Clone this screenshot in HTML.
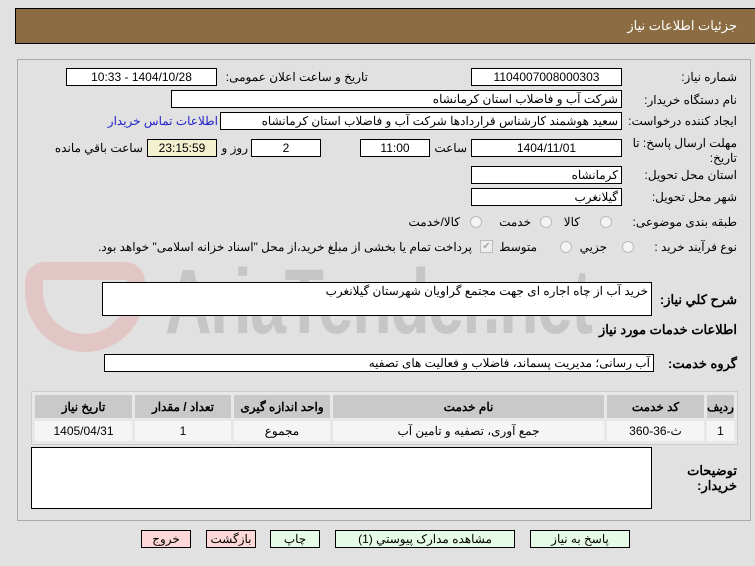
<!DOCTYPE html>
<html><head><meta charset="utf-8"><style>
*{box-sizing:border-box;margin:0;padding:0}
body{width:755px;height:566px;background:#e1e1e1;font-family:"Liberation Sans","Noto Sans CJK SC",sans-serif;font-size:12px;color:#000;position:relative;overflow:hidden}
.a{position:absolute}
.hd{left:15px;top:8px;width:745px;height:36px;background:#8b6c43;border:1px solid #000}
.hd span{position:absolute;right:22px;top:9px;color:#fff;font-size:13px}
.pn{left:17px;top:59px;width:734px;height:462px;border:1px solid #aaa;background:#e1e1e1}
.b{position:absolute;background:#fff;border:1px solid #000;direction:rtl;font-size:12px;line-height:16px;padding:0 3px;white-space:nowrap;overflow:hidden}
.c{text-align:center}
.l{position:absolute;direction:rtl;white-space:nowrap;font-size:12px}
.w{white-space:normal}
.bold{font-weight:bold;font-size:13px}
.rd{position:absolute;width:12px;height:12px;border-radius:50%;border:1px solid #bbb;background:#f4f4f4}
table{position:absolute;left:31px;top:391px;width:707px;border-collapse:separate;border-spacing:3px;border:1px solid #ccc;background:#e8e8e8;direction:rtl}
th{background:#c9c9c9;height:23px;font-size:12px}
td{background:#f5f5f5;height:20px;text-align:center}
.bt{position:absolute;top:530px;height:18px;border:1px solid #000;text-align:center;font-size:12px;line-height:16px;direction:rtl}
.wm{left:165px;top:252px;font-size:92px;line-height:100px;font-weight:bold;color:rgba(120,120,120,.25);font-family:"Liberation Sans Narrow","Liberation Sans",sans-serif;letter-spacing:-2px;transform:scaleX(.7);transform-origin:left}
</style></head><body>
<div class="a hd"><span>جزئیات اطلاعات نیاز</span></div>
<div class="a pn"></div>
<div class="a" style="left:25px;top:262px;width:120px;height:90px;border:18px solid rgba(230,150,150,.35);border-radius:20px 20px 60px 60px"></div>
<div class="a wm">AriaTender.net</div>

<div class="l" style="right:18px;top:70px">شماره نیاز:</div>
<div class="b c" style="left:471px;top:68px;width:151px;height:18px">1104007008000303</div>
<div class="l" style="right:387px;top:70px">تاریخ و ساعت اعلان عمومی:</div>
<div class="b c" style="left:66px;top:68px;width:151px;height:18px">1404/10/28 - 10:33</div>

<div class="l" style="right:18px;top:93px">نام دستگاه خریدار:</div>
<div class="b" style="left:171px;top:90px;width:451px;height:18px">شرکت آب و فاضلاب استان کرمانشاه</div>

<div class="l" style="right:18px;top:114px">ایجاد کننده درخواست:</div>
<div class="b" style="left:220px;top:112px;width:402px;height:18px">سعید هوشمند کارشناس قراردادها شرکت آب و فاضلاب استان کرمانشاه</div>
<div class="l" style="right:537px;top:114px;color:#2222cc">اطلاعات تماس خریدار</div>

<div class="l w" style="right:18px;top:136px;line-height:15px;width:112px">مهلت ارسال پاسخ: تا تاریخ:</div>
<div class="b c" style="left:471px;top:139px;width:151px;height:18px">1404/11/01</div>
<div class="l" style="right:288px;top:141px">ساعت</div>
<div class="b c" style="left:360px;top:139px;width:70px;height:18px">11:00</div>
<div class="b c" style="left:251px;top:139px;width:70px;height:18px">2</div>
<div class="l" style="right:507px;top:141px">روز و</div>
<div class="b c" style="left:147px;top:139px;width:70px;height:18px;background:#f3f0cf">23:15:59</div>
<div class="l" style="right:612px;top:141px">ساعت باقي مانده</div>

<div class="l" style="right:18px;top:168px">استان محل تحویل:</div>
<div class="b" style="left:471px;top:166px;width:151px;height:18px">کرمانشاه</div>
<div class="l" style="right:18px;top:190px">شهر محل تحویل:</div>
<div class="b" style="left:471px;top:188px;width:151px;height:18px">گیلانغرب</div>

<div class="l" style="right:18px;top:215px">طبقه بندی موضوعی:</div>
<div class="rd" style="left:600px;top:216px"></div><div class="l" style="right:175px;top:215px">کالا</div>
<div class="rd" style="left:540px;top:216px"></div><div class="l" style="right:224px;top:215px">خدمت</div>
<div class="rd" style="left:470px;top:216px"></div><div class="l" style="right:295px;top:215px">کالا/خدمت</div>

<div class="l" style="right:18px;top:240px">نوع فرآیند خرید :</div>
<div class="rd" style="left:622px;top:241px"></div><div class="l" style="right:148px;top:240px">جزیي</div>
<div class="rd" style="left:560px;top:241px"></div><div class="l" style="right:218px;top:240px">متوسط</div>
<div class="a" style="left:480px;top:240px;width:13px;height:13px;border:1px solid #bbb;background:#eee;color:#aaa;font-size:10px;line-height:11px;text-align:center">✔</div>
<div class="l" style="right:283px;top:240px">پرداخت تمام یا بخشی از مبلغ خرید،از محل "اسناد خزانه اسلامی" خواهد بود.</div>

<div class="l bold" style="right:18px;top:292px">شرح كلي نیاز:</div>
<div class="b" style="left:102px;top:282px;width:550px;height:34px">خرید آب از چاه اجاره ای جهت مجتمع گراویان شهرستان گیلانغرب</div>
<div class="l bold" style="right:18px;top:322px">اطلاعات خدمات مورد نیاز</div>
<div class="l bold" style="right:18px;top:356px">گروه خدمت:</div>
<div class="b" style="left:104px;top:354px;width:550px;height:18px">آب رسانی؛ مدیریت پسماند، فاضلاب و فعالیت های تصفیه</div>

<table>
<tr><th style="width:27px">ردیف</th><th style="width:97px">کد خدمت</th><th>نام خدمت</th><th style="width:96px">واحد اندازه گیری</th><th style="width:96px">تعداد / مقدار</th><th style="width:97px">تاریخ نیاز</th></tr>
<tr><td>1</td><td>ث-36-360</td><td>جمع آوری، تصفیه و تامین آب</td><td>مجموع</td><td>1</td><td>1405/04/31</td></tr>
</table>

<div class="l bold w" style="right:18px;top:463px;line-height:15px;width:62px">توضیحات خریدار:</div>
<div class="b" style="left:31px;top:447px;width:621px;height:62px"></div>

<div class="bt" style="left:141px;width:50px;background:#fcd8d8">خروج</div>
<div class="bt" style="left:206px;width:50px;background:#fcd8d8">بازگشت</div>
<div class="bt" style="left:270px;width:50px;background:#e6fbe6">چاپ</div>
<div class="bt" style="left:335px;width:180px;background:#e6fbe6">مشاهده مدارک پیوستي (1)</div>
<div class="bt" style="left:530px;width:100px;background:#e6fbe6">پاسخ به نیاز</div>
</body></html>
